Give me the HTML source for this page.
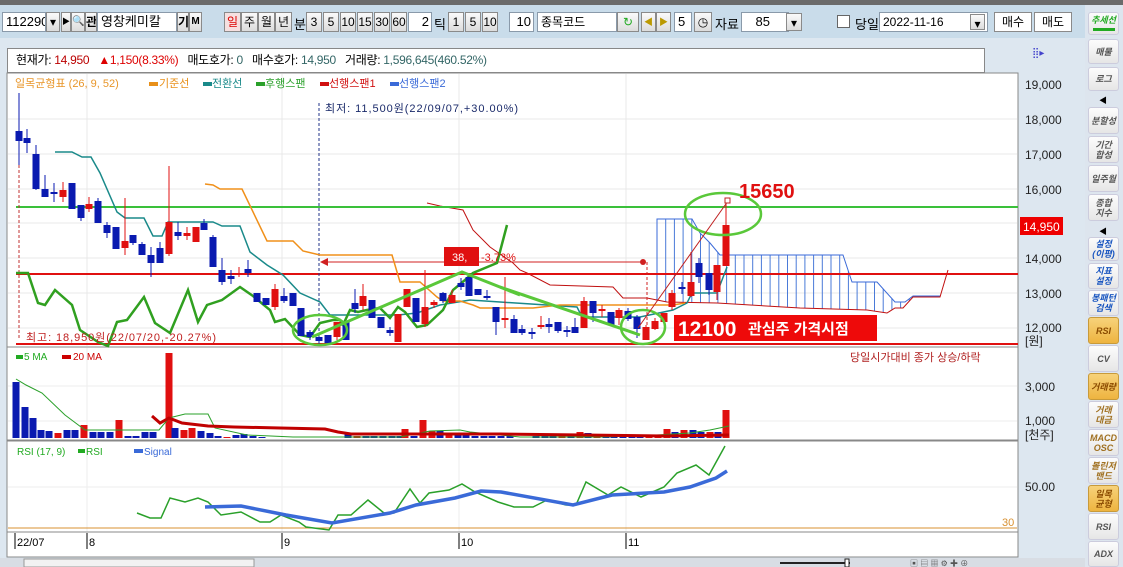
<!DOCTYPE html>
<html><head><meta charset="utf-8">
<style>
*{margin:0;padding:0;box-sizing:border-box}
body{width:1123px;height:567px;overflow:hidden;background:#c9dcea;font-family:"Liberation Sans","Noto Sans CJK KR",sans-serif;font-size:12px;position:relative}
.a{position:absolute;white-space:nowrap}
.btn{position:absolute;background:linear-gradient(#fafafa,#dcdcdc);border:1px solid #8a8a8a;font-size:12px;text-align:center;line-height:18px;height:20px;color:#000;overflow:hidden;white-space:nowrap}
.inp{position:absolute;background:#fff;border:1px solid #8a9aaa;height:20px;line-height:18px;font-size:13px;padding-left:3px;overflow:hidden;white-space:nowrap}
.sb{position:absolute;left:1088px;width:31px;height:26px;background:linear-gradient(#fcfcfc,#e6e6e6);border:1px solid #ccd;border-radius:3px;font-size:9px;line-height:10px;text-align:center;font-style:italic;font-weight:bold;color:#555;display:flex;align-items:center;justify-content:center}
.sb.o{background:linear-gradient(#f7d27a,#eeb440);border-color:#c89a3a;color:#8a4a00}
.sb.b{color:#1a56c0}
</style></head><body>
<div class="a" style="left:0;top:0;width:1123px;height:5px;background:#6b6b6b"></div>
<div class="inp" style="left:2px;top:12px;width:44px">112290</div>
<div class="btn" style="left:46px;top:12px;width:14px">▾</div>
<div class="btn" style="left:61px;top:12px;width:10px;font-size:8px">▶</div>
<div class="btn" style="left:71px;top:12px;width:14px;font-size:10px">🔍</div>
<div class="btn" style="left:85px;top:12px;width:12px;font-weight:bold">관</div>
<div class="inp" style="left:97px;top:12px;width:80px">영창케미칼</div>
<div class="btn" style="left:177px;top:12px;width:12px;font-weight:bold">기</div>
<div class="btn" style="left:189px;top:12px;width:13px;font-weight:bold;font-size:10px">M</div>
<div class="btn" style="left:224px;top:12px;width:17px;color:#d00;background:#f6e0e0">일</div>
<div class="btn" style="left:241px;top:12px;width:17px">주</div>
<div class="btn" style="left:258px;top:12px;width:17px">월</div>
<div class="btn" style="left:275px;top:12px;width:17px">년</div>
<div class="a" style="left:294px;top:14px;font-size:13px">분</div>
<div class="btn" style="left:306px;top:12px;width:16px">3</div>
<div class="btn" style="left:323px;top:12px;width:16px">5</div>
<div class="btn" style="left:340px;top:12px;width:16px">10</div>
<div class="btn" style="left:357px;top:12px;width:16px">15</div>
<div class="btn" style="left:374px;top:12px;width:16px">30</div>
<div class="btn" style="left:391px;top:12px;width:16px">60</div>
<div class="inp" style="left:408px;top:12px;width:24px;text-align:right;padding-right:2px">2</div>
<div class="a" style="left:434px;top:14px;font-size:13px">틱</div>
<div class="btn" style="left:448px;top:12px;width:16px">1</div>
<div class="btn" style="left:465px;top:12px;width:16px">5</div>
<div class="btn" style="left:482px;top:12px;width:16px">10</div>
<div class="inp" style="left:509px;top:12px;width:25px;text-align:right;padding-right:2px">10</div>
<div class="inp" style="left:537px;top:12px;width:80px;font-size:12px">종목코드</div>
<div class="btn" style="left:617px;top:12px;width:22px;color:#2a2">↻</div>
<div class="btn" style="left:641px;top:12px;width:15px;color:#b90;font-size:9px">◀</div>
<div class="btn" style="left:656px;top:12px;width:15px;color:#b90;font-size:9px">▶</div>
<div class="inp" style="left:674px;top:12px;width:18px">5</div>
<div class="btn" style="left:694px;top:12px;width:18px">◷</div>
<div class="a" style="left:715px;top:14px;font-size:13px">자료</div>
<div class="inp" style="left:741px;top:12px;width:48px;text-align:right;padding-right:18px">85</div>
<div class="btn" style="left:786px;top:13px;width:16px;height:18px">▾</div>
<div class="a" style="left:837px;top:15px;width:13px;height:13px;background:#fff;border:1px solid #666"></div>
<div class="a" style="left:855px;top:14px;font-size:13px">당일</div>
<div class="inp" style="left:879px;top:12px;width:109px;font-size:12px">2022-11-16</div>
<div class="btn" style="left:970px;top:14px;width:15px;height:16px">▾</div>
<div class="btn" style="left:994px;top:12px;width:38px;background:#fff">매수</div>
<div class="btn" style="left:1034px;top:12px;width:38px;background:#fff">매도</div>
<div class="a" style="left:0;top:38px;width:1085px;height:521px;background:#dde7f0"></div>
<div class="a" style="left:7px;top:48px;width:978px;height:25px;background:#fff;border:1px solid #888;font-size:12px;line-height:23px;padding-left:8px;letter-spacing:-0.3px">현재가: <span style="color:#b00">14,950</span> &nbsp;&nbsp;<span style="color:#d00">▲1,150(8.33%)</span> &nbsp;&nbsp;매도호가: <span style="color:#366">0</span> &nbsp;&nbsp;매수호가: <span style="color:#366">14,950</span> &nbsp;&nbsp;거래량: <span style="color:#366">1,596,645(460.52%)</span></div>
<div class="a" style="left:1032px;top:48px;color:#44c;font-size:10px">⣿▸</div>
<svg class="a" style="left:0;top:0" width="1123" height="567" xmlns="http://www.w3.org/2000/svg" id="sv" font-family="Liberation Sans, Noto Sans CJK KR, sans-serif"></svg>
<div class="a" style="left:1085px;top:5px;width:38px;height:562px;background:#dde5ee"></div>
<div class="sb" style="top:12px;height:23px;color:#2a2;font-size:9px;align-items:flex-start;padding-top:2px">추세선<div style="position:absolute;left:4px;top:15px;width:22px;height:3px;background:#2a2"></div></div>
<div class="sb" style="top:39px;height:25px">매물</div>
<div class="sb" style="top:67px;height:24px">로그</div>
<div class="a" style="left:1099px;top:95px;font-size:8px">◀</div>
<div class="sb" style="top:107px;height:27px">분할성</div>
<div class="sb" style="top:136px;height:27px">기간<br>합성</div>
<div class="sb" style="top:165px;height:27px">일주월</div>
<div class="sb" style="top:194px;height:27px">종합<br>지수</div>
<div class="a" style="left:1099px;top:226px;font-size:8px">◀</div>
<div class="sb b" style="top:237px;height:24px">설정<br>(이평)</div>
<div class="sb b" style="top:263px;height:26px">지표<br>설정</div>
<div class="sb b" style="top:290px;height:26px">봉패턴<br>검색</div>
<div class="sb o" style="top:317px;height:27px">RSI</div>
<div class="sb" style="top:345px;height:27px">CV</div>
<div class="sb o" style="top:373px;height:27px">거래량</div>
<div class="sb" style="top:401px;height:27px;color:#a07020">거래<br>대금</div>
<div class="sb" style="top:429px;height:27px;color:#a07020">MACD<br>OSC</div>
<div class="sb" style="top:457px;height:27px;color:#a07020">볼린저<br>밴드</div>
<div class="sb o" style="top:485px;height:27px">일목<br>균형</div>
<div class="sb" style="top:513px;height:27px">RSI</div>
<div class="sb" style="top:541px;height:26px">ADX</div>
<script>
var s='';
function L(p,c,w,ex){return '<polyline fill="none" stroke="'+c+'" stroke-width="'+w+'" points="'+p+'" '+(ex||'')+'/>';}
function R(x,y,w,h,c,ex){return '<rect x="'+x+'" y="'+y+'" width="'+w+'" height="'+h+'" fill="'+c+'" '+(ex||'')+'/>';}
function T(x,y,t,c,sz,ex){return '<text x="'+x+'" y="'+y+'" fill="'+c+'" font-size="'+sz+'" '+(ex||'')+'>'+t+'</text>';}
function interp(p,x){if(x<=p[0][0])return p[0][1];for(var i=0;i<p.length-1;i++){if(x>=p[i][0]&&x<=p[i+1][0]){return p[i][1]+(p[i+1][1]-p[i][1])*(x-p[i][0])/(p[i+1][0]-p[i][0]);}}return p[p.length-1][1];}
s+=R(7,73,1011,274,'#fff','stroke="#888"');
s+=R(7,347,1011,93,'#fff','stroke="#888"');
s+=R(7,441,1011,91,'#fff','stroke="#888"');
s+=R(7,532,1011,25,'#fff','stroke="#888"');
s+=R(0,558,1085,9,'#d8dde4');
s+=R(24,559,230,8,'#f2f2f2','stroke="#999"');
[119,154,189,223,258,293,328].forEach(function(y){s+=L('8,'+y+' 1017,'+y,'#e8e8e8',1)});
[386,421].forEach(function(y){s+=L('8,'+y+' 1017,'+y,'#eee',1)});
s+=L('8,487 1017,487','#eee',1);
[87,282,459,626].forEach(function(x){s+=L(x+',74 '+x+',346','#e8e8e8',1)+L(x+',348 '+x+',439','#eee',1)+L(x+',442 '+x+',531','#eee',1)+L(x+',533 '+x+',549','#000',1)});
s+=L('15,533 15,549','#000',1);
s+=L('8,528 1017,528','#d89030',1);
[['19,000',89],['18,000',124],['17,000',159],['16,000',194],['14,000',263],['13,000',298],['12,000',332]].forEach(function(a){s+=T(1025,a[1],a[0],'#222',12)});
s+=T(1025,345,'[원]','#222',12);
s+=R(1020,217,43,18,'#e00');s+=T(1023,231,'14,950','#fff',12);
s+=T(1025,391,'3,000','#222',12);s+=T(1025,425,'1,000','#222',12);s+=T(1025,439,'[천주]','#222',12);
s+=T(1025,491,'50.00','#222',12);
s+=T(1002,526,'30','#d89030',11);
s+=T(17,546,'22/07','#000',11);s+=T(89,546,'8','#000',11);s+=T(284,546,'9','#000',11);s+=T(461,546,'10','#000',11);s+=T(628,546,'11','#000',11);
s+=T(15,87,'일목균형표 (26, 9, 52)','#e8962a',11);
s+=R(149,82,9,4,'#e8901a')+T(159,87,'기준선','#e8901a',11);
s+=R(203,82,9,4,'#1a8a8a')+T(212,87,'전환선','#1a8a8a',11);
s+=R(256,82,9,4,'#2aa02a')+T(265,87,'후행스팬','#2aa02a',11);
s+=R(320,82,9,4,'#d01010')+T(329,87,'선행스팬1','#d01010',11);
s+=R(390,82,9,4,'#3a6ad8')+T(399,87,'선행스팬2','#3a6ad8',11);
s+=R(16,355,7,4,'#2a2')+T(24,360,'5 MA','#2a2',10);
s+=R(62,355,9,4,'#c00')+T(73,360,'20 MA','#c00',10);
s+=T(850,361,'당일시가대비 종가 상승/하락','#b02020',11);
s+=T(17,455,'RSI (17, 9)','#2a2',10)+R(78,449,7,4,'#2a2')+T(86,455,'RSI','#2a2',10)+R(134,449,9,4,'#3a6ad8')+T(144,455,'Signal','#3a6ad8',10);
var BL=[[657,219],[692,219],[700,233],[710,243],[720,255],[843,255],[852,282],[877,282],[895,302],[905,302],[913,296],[940,296]];
var RL=[[427,203],[440,206],[463,210],[473,230],[490,247],[513,263],[520,270],[527,273],[550,285],[613,287],[623,298],[647,298],[667,302],[717,303],[800,308],[867,310],[887,313],[895,308],[903,308],[913,297],[940,297],[948,270]];
for(var x=657;x<=940;x+=8.7){var by=interp(BL,x),ry=interp(RL,x);if(ry>by+1)s+=L(x+','+by+' '+x+','+ry,'#4a7ad8',1);}
s+=L('657,300 657,219 692,219 700,233 710,243 720,255 843,255 852,282 877,282 895,302 905,302 913,296 940,296','#3a6ad8',1);
s+=L(RL.map(function(p){return p.join(',')}).join(' '),'#c01010',1);
s+=L('16,274 1018,274','#e01010',2);
s+=L('16,344 1018,344','#e01010',2);
s+=L('16,207 1018,207','#3ac03a',2);
s+=L('319,103 319,345','#223388',1,'stroke-dasharray="3,2"');
s+=L('19,165 19,340','#c03030',1,'stroke-dasharray="3,2"');
s+=L('647,262 647,335','#d02020',1,'stroke-dasharray="3,2"');
s+=L('322,262 643,262','#d02020',1);
s+='<polygon points="320,262 328,258 328,266" fill="#d02020"/><circle cx="643" cy="262" r="3" fill="#d02020"/>';
s+=L('55,152 72,152 82,157 91,157 100,173 117,212 125,218 144,218 153,236 162,236 168,222 213,222 222,226 240,226 250,252 267,265 283,275 300,293 320,302 330,315 398,315 417,313 440,305 470,300 500,302 577,307 582,317 640,317 673,310 687,303 692,293 717,293 727,267','#1a8a8a',1.5);
s+=L('205,184 213,185 220,189 242,189 267,241 293,241 303,251 320,255 392,255 400,282 420,282 437,297 443,301 460,301 473,305 480,308 520,308 533,308 560,305 673,305 685,303','#f0901a',1.5);
s+=L('16,273 28,273 38,303 45,305 55,290 72,305 80,330 98,342 108,346 117,322 127,320 144,297 155,323 170,333 188,290 198,322 207,305 222,300 240,287 253,296 270,310 275,322 285,319 300,335 310,337 320,323 333,320 340,320 343,325 350,310 358,312 367,310 380,308 390,318 398,307 405,312 417,327 427,325 443,310 453,290 465,280 473,273 497,263 507,225','#30a020',2.5);
var C=[[19,131,141,93,165,'b'],[27,138,143,129,153,'b'],[36,154,189,145,190,'b'],[45,189,197,175,197,'b'],[54,192,194,183,202,'b'],[63,190,197,182,202,'r'],[72,183,209,183,209,'b'],[81,205,218,205,221,'b'],[89,204,209,197,212,'r'],[98,201,223,198,223,'b'],[107,225,233,222,238,'b'],[116,227,249,227,249,'b'],[125,241,248,198,255,'r'],[133,235,243,235,245,'b'],[142,244,255,242,255,'b'],[151,255,263,247,277,'b'],[160,248,263,242,263,'b'],[169,222,254,166,256,'r'],[178,232,236,222,240,'b'],[187,233,236,227,240,'r'],[196,227,242,227,242,'r'],[204,223,230,219,230,'b'],[213,237,267,235,267,'b'],[222,270,282,258,285,'b'],[231,276,279,270,284,'b'],[239,273,275,267,277,'r'],[248,269,273,260,277,'b'],[257,293,302,293,302,'b'],[266,298,305,298,305,'b'],[275,289,307,284,310,'r'],[284,296,301,288,303,'b'],[293,293,306,293,306,'b'],[301,308,336,308,336,'b'],[310,332,337,330,340,'b'],[319,337,341,335,343,'b'],[328,335,343,335,343,'b'],[337,322,337,322,340,'r'],[346,322,340,322,340,'b'],[355,303,309,289,313,'b'],[363,296,306,284,310,'r'],[372,300,318,300,318,'b'],[381,317,328,317,328,'b'],[390,330,333,327,336,'b'],[398,314,342,314,342,'r'],[407,289,307,289,307,'r'],[416,298,322,298,322,'b'],[425,307,324,270,327,'r'],[434,302,305,300,308,'r'],[443,293,301,292,303,'b'],[452,295,303,290,303,'r'],[461,283,287,278,290,'b'],[469,277,296,277,296,'b'],[478,289,295,289,295,'b'],[487,296,298,290,300,'b'],[496,307,322,307,335,'b'],[505,318,320,277,328,'r'],[514,319,333,315,333,'b'],[522,329,333,325,335,'b'],[532,332,334,328,339,'b'],[541,325,327,316,329,'r'],[549,324,327,318,333,'b'],[558,322,331,322,333,'b'],[567,330,331,326,337,'b'],[575,327,333,318,333,'b'],[584,301,328,297,328,'r'],[593,301,313,301,322,'b'],[602,309,311,305,317,'r'],[611,312,325,312,325,'b'],[619,310,318,308,325,'r'],[628,311,319,308,321,'b'],[637,317,329,315,338,'b'],[646,327,340,325,340,'r'],[655,321,329,318,330,'r'],[664,313,322,313,325,'r'],[672,293,307,290,310,'r'],[682,287,289,282,294,'b'],[691,282,296,252,297,'r'],[699,263,277,258,283,'b'],[709,273,290,273,295,'b'],[717,265,292,265,300,'r'],[726,225,266,200,266,'r']];
C.forEach(function(c){var col=c[5]=='r'?'#e01010':'#0a1ab0';s+=L(c[0]+','+c[3]+' '+c[0]+','+c[4],col,1);s+=R(c[0]-3.5,c[1],7,Math.max(c[2]-c[1],2),col);});
s+=L('312,337 462,272 520,295','#5ac83a',3);
s+=L('500,287 640,335','#5ac83a',3);
s+='<ellipse cx="320" cy="330" rx="27" ry="15" fill="none" stroke="#5ac83a" stroke-width="2.5"/>';
s+='<ellipse cx="643" cy="327" rx="22" ry="17" fill="none" stroke="#5ac83a" stroke-width="2.5"/>';
s+='<ellipse cx="723" cy="214" rx="38" ry="21" fill="none" stroke="#5ac83a" stroke-width="2.5"/>';
s+=L('638,328 728,201','#c02020',1);
s+=R(725,198,5,5,'#fff','stroke="#c02020"');
s+=T(325,112,'최저: 11,500원(22/09/07,+30.00%)','#1a2a6a',11,'textLength="193"');
s+=T(26,341,'최고: 18,950원(22/07/20,-20.27%)','#c02020',11,'textLength="190"');
s+=R(444,247,35,19,'#e01010');s+=T(452,261,'38,','#fff',11);s+=T(481,261,'-3.73%','#e01010',11);
s+=T(739,198,'15650','#e01010',20,'font-weight="bold"');
s+=R(674,315,203,26,'#ee0a0a');
s+=T(678,336,'12100','#fff',21,'font-weight="bold"');s+=T(748,334,'관심주 가격시점','#fff',15,'font-weight="bold"');
var V=[[16,382,'b'],[25,407,'b'],[33,418,'b'],[41,430,'b'],[49,431,'b'],[58,433,'r'],[67,430,'b'],[75,430,'b'],[84,425,'r'],[93,432,'b'],[101,432,'b'],[110,432,'b'],[119,420,'r'],[128,436,'b'],[136,436,'b'],[145,432,'b'],[153,432,'b'],[169,353,'r'],[175,428,'b'],[184,430,'r'],[192,428,'r'],[201,431,'b'],[210,433,'b'],[218,436,'b'],[227,437,'r'],[236,435,'b'],[244,434,'b'],[253,436,'b'],[262,437,'b'],[348,434,'b'],[357,436,'r'],[366,436,'b'],[374,436,'b'],[383,436,'b'],[392,436,'b'],[400,436,'b'],[405,429,'r'],[414,436,'b'],[423,420,'r'],[432,431,'r'],[440,431,'b'],[449,434,'r'],[458,435,'b'],[466,434,'b'],[475,436,'b'],[484,436,'b'],[492,436,'b'],[501,436,'b'],[510,436,'b'],[536,436,'b'],[545,436,'b'],[553,436,'b'],[562,436,'r'],[571,436,'b'],[580,432,'r'],[588,433,'b'],[597,434,'r'],[606,436,'b'],[614,436,'b'],[623,436,'b'],[632,436,'b'],[640,436,'b'],[649,436,'r'],[658,436,'r'],[667,429,'r'],[675,432,'b'],[684,430,'r'],[693,430,'b'],[701,432,'b'],[710,432,'r'],[718,432,'b'],[726,410,'r']];
V.forEach(function(v){s+=R(v[0]-3.5,v[1],7,437-v[1]+1,v[2]=='r'?'#e01010':'#0a1ab0');});
s+=L('16,379 26,385 42,393 65,415 85,430 130,430 159,430 169,418 185,414 208,414 215,428 247,435 293,437 400,437 430,431 460,430 470,432 520,437 600,437 640,436 690,433 710,430 729,426','#2aa02a',1);
s+=L('152,416 160,423 169,418 182,423 208,426 234,427 280,428 325,429 338,432 351,434 500,434 664,436 729,435','#c00000',3);
s+=L('137,513 150,518 161,518 170,498 185,502 198,498 208,502 221,515 241,512 260,522 270,522 281,515 299,522 306,527 329,530 338,515 351,515 368,500 384,513 394,513 410,489 420,503 429,493 449,490 462,484 475,492 498,502 514,507 533,507 547,500 566,505 576,505 586,482 608,495 621,487 641,497 664,487 677,473 696,465 709,475 725,446','#2aa02a',1.5);
s+=L('205,507 241,506 286,515 332,523 390,513 416,505 455,498 481,491 501,492 573,505 612,495 664,492 690,487 716,478 727,471','#3a6ad8',3.5);
s+=L('780,563 850,563','#222',2);s+=R(845,559,4,8,'#fff','stroke="#222"');
s+=T(910,566,'▣ ▤ ▦ ⚙ ✚ ⊕','#555',8);
document.getElementById('sv').innerHTML=s;
</script>
</body></html>
